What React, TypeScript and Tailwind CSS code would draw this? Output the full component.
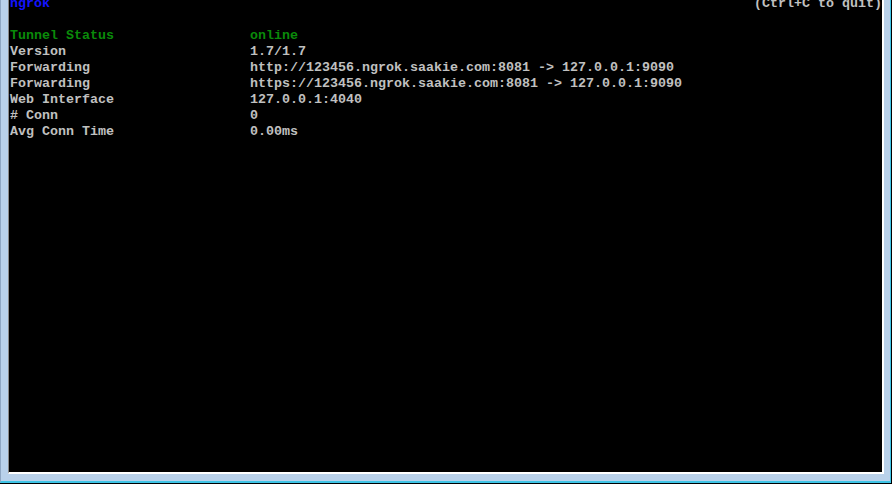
const rows: [string, string][] = [
  ['Version', '1.7/1.7'],
  ['Forwarding', 'http://123456.ngrok.saakie.com:8081 -> 127.0.0.1:9090'],
  ['Forwarding', 'https://123456.ngrok.saakie.com:8081 -> 127.0.0.1:9090'],
  ['Web Interface', '127.0.0.1:4040'],
  ['# Conn', '0'],
  ['Avg Conn Time', '0.00ms'],
]

export default function App() {
  return (
    <div className="h-[484px] w-[892px] overflow-hidden bg-black">
      <div className="flex h-[483px] w-[891px] flex-col border-b-2 border-l border-r border-b-[#3fc4e6] border-l-[#8ea6c2] border-r-[#3fc4e6] bg-[#b9d1ea] pb-[7px] pl-[7px] pr-[6px]">
        <div
          className="flex-1 overflow-hidden border-b-2 border-l border-r-2 border-b-white border-l-[#8a8a8a] border-r-white bg-black pl-[1px] text-[13.33px] font-bold leading-[16px] whitespace-pre text-[#c0c0c0]"
          style={{ fontFamily: '"Liberation Mono", "DejaVu Sans Mono", monospace' }}
        >
          <div className="-mt-[4px] flex justify-between">
            <span className="text-[#1414ff]">ngrok</span>
            <span>(Ctrl+C to quit)</span>
          </div>
          <div className="h-[16px]" />
          <div className="grid grid-cols-[240px_1fr] text-[#0a8a0a]">
            <span>Tunnel Status</span>
            <span>online</span>
          </div>
          {rows.map(([label, value], i) => (
            <div key={i} className="grid grid-cols-[240px_1fr]">
              <span>{label}</span>
              <span>{value}</span>
            </div>
          ))}
        </div>
      </div>
    </div>
  )
}
